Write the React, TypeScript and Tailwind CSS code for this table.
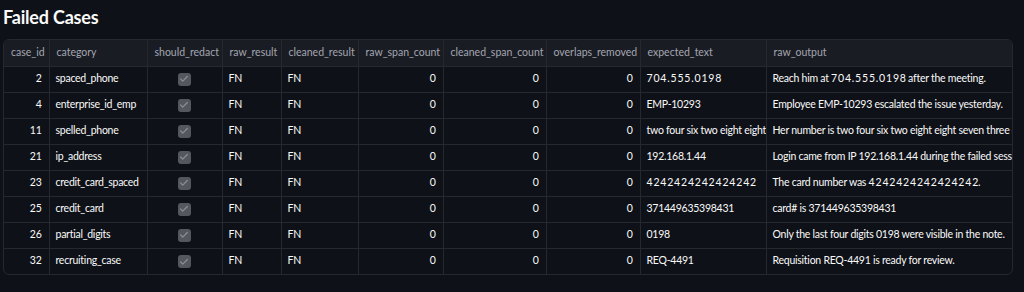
import { Check } from "lucide-react";

const columns = [
  { key: "case_id", width: 45, align: "right" },
  { key: "category", width: 98, align: "left" },
  { key: "should_redact", width: 75, align: "center" },
  { key: "raw_result", width: 59, align: "left" },
  { key: "cleaned_result", width: 77, align: "left" },
  { key: "raw_span_count", width: 85, align: "right" },
  { key: "cleaned_span_count", width: 103, align: "right" },
  { key: "overlaps_removed", width: 94, align: "right" },
  { key: "expected_text", width: 126, align: "left" },
  { key: "raw_output", width: 248, align: "left" },
];

const rows = [
  {
    id: 2,
    category: "spaced_phone",
    expected: "7\u20090\u20094\u2009.\u20095\u20095\u20095\u2009.\u20090\u20091\u20099\u20098",
    output: "Reach him at 7\u20090\u20094\u2009.\u20095\u20095\u20095\u2009.\u20090\u20091\u20099\u20098 after the meeting.",
  },
  {
    id: 4,
    category: "enterprise_id_emp",
    expected: "EMP-10293",
    output: "Employee EMP-10293 escalated the issue yesterday.",
  },
  {
    id: 11,
    category: "spelled_phone",
    expected: "two four six two eight eight seven three eight",
    output: "Her number is two four six two eight eight seven three eight one.",
  },
  {
    id: 21,
    category: "ip_address",
    expected: "192.168.1.44",
    output: "Login came from IP 192.168.1.44 during the failed session.",
  },
  {
    id: 23,
    category: "credit_card_spaced",
    expected: "4\u20092\u20094\u20092\u20094\u20092\u20094\u20092\u20094\u20092\u20094\u20092\u20094\u20092\u20094\u20092",
    output: "The card number was 4\u20092\u20094\u20092\u20094\u20092\u20094\u20092\u20094\u20092\u20094\u20092\u20094\u20092\u20094\u20092.",
  },
  {
    id: 25,
    category: "credit_card",
    expected: "371449635398431",
    output: "card# is 371449635398431",
  },
  {
    id: 26,
    category: "partial_digits",
    expected: "0198",
    output: "Only the last four digits 0198 were visible in the note.",
  },
  {
    id: 32,
    category: "recruiting_case",
    expected: "REQ-4491",
    output: "Requisition REQ-4491 is ready for review.",
  },
];

const alignClass: Record<string, string> = {
  left: "text-left",
  right: "text-right",
  center: "text-center",
};

const Checkbox = () => (
  <span className="inline-flex w-[13px] h-[13px] rounded-[3px] bg-[#55575f] items-center justify-center align-middle">
    <Check className="w-[10px] h-[10px] text-[#8b8d94]" strokeWidth={3} />
  </span>
);

export default function App() {
  return (
    <div className="min-h-[292px] bg-[#0e1117] text-[#fafafa] px-[3px] pt-[5px] font-['Lato','Liberation_Sans',sans-serif]">
      <h3 className="text-[18px] font-bold leading-[24px] mb-[10px] tracking-[-0.2px]">Failed Cases</h3>

      <div className="w-[1010px] rounded-[6px] border border-[#262830] overflow-hidden">
        <table className="table-fixed border-collapse w-[1010px] text-[10.5px]">
          <colgroup>
            {columns.map((col) => (
              <col key={col.key} style={{ width: col.width }} />
            ))}
          </colgroup>
          <thead>
            <tr className="bg-[#1a1c24] h-[26px]">
              {columns.map((col, i) => (
                <th
                  key={col.key}
                  className={`font-normal text-left text-[#a3a6b0] pl-[7px] pr-1 whitespace-nowrap overflow-hidden border-b border-[#262830] ${
                    i < columns.length - 1 ? "border-r" : ""
                  }`}
                >
                  {col.key}
                </th>
              ))}
            </tr>
          </thead>
          <tbody>
            {rows.map((row, r) => {
              const values: (string | number | null)[] = [
                row.id,
                row.category,
                null,
                "FN",
                "FN",
                0,
                0,
                0,
                row.expected,
                row.output,
              ];
              return (
                <tr key={row.id} className="h-[26px]">
                  {columns.map((col, i) => (
                    <td
                      key={col.key}
                      className={`${alignClass[col.align]} pl-[6px] pr-[7px] tracking-[-0.25px] whitespace-nowrap overflow-hidden border-[#262830] ${
                        i < columns.length - 1 ? "border-r" : ""
                      } ${r < rows.length - 1 ? "border-b" : ""}`}
                    >
                      {col.key === "should_redact" ? <Checkbox /> : values[i]}
                    </td>
                  ))}
                </tr>
              );
            })}
          </tbody>
        </table>
      </div>
    </div>
  );
}
